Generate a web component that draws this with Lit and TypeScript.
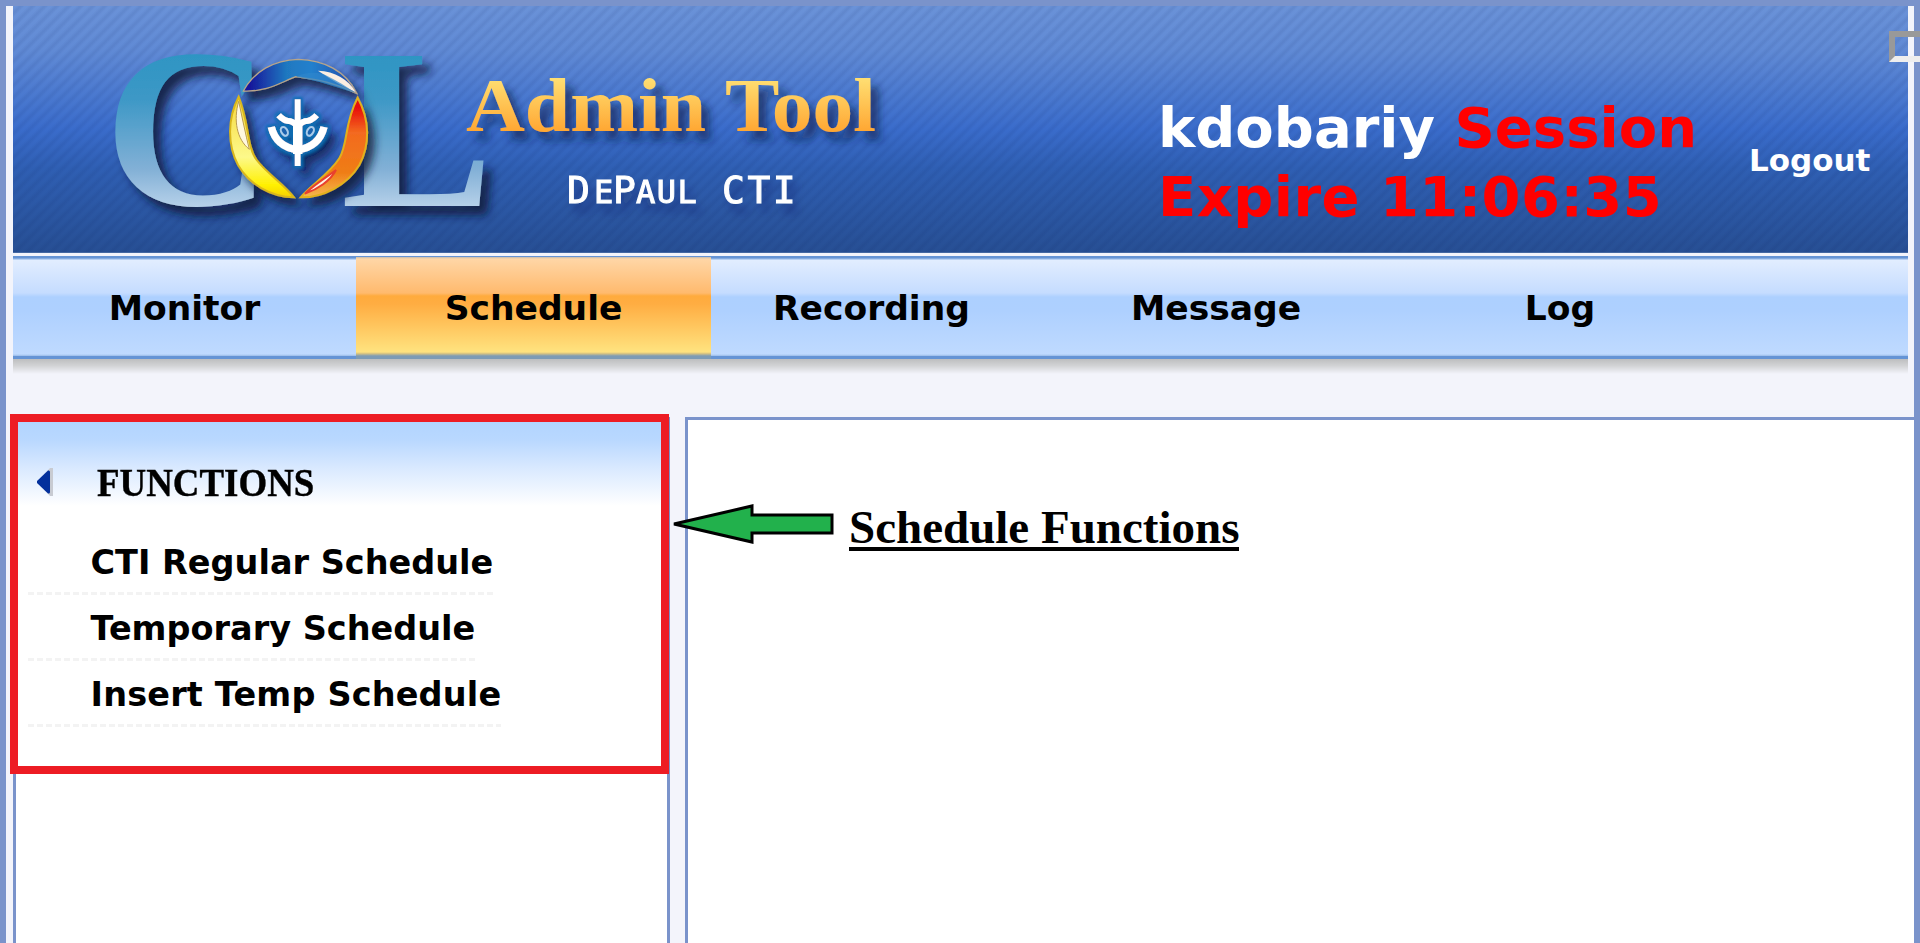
import { LitElement, html, css } from "lit";
import { customElement } from "lit/decorators.js";

@customElement("col-logo")
class ColLogo extends LitElement {
  static styles = css`
    :host { display: block; }
    svg { display: block; overflow: visible; }
    .serif { font-family: "Liberation Serif", serif; font-weight: bold; }
    .mono { font-family: "DejaVu Sans Mono", monospace; font-weight: normal; }
  `;
  render() {
    return html`
      <svg width="900" height="246" viewBox="13 6 900 246">
        <defs>
          <linearGradient id="teal" gradientUnits="userSpaceOnUse" x1="0" y1="52" x2="0" y2="208">
            <stop offset="0" stop-color="#2d95c3" />
            <stop offset="0.3" stop-color="#3d98c6" />
            <stop offset="0.75" stop-color="#82b0d6" />
            <stop offset="1" stop-color="#b8d2ea" />
          </linearGradient>
          <linearGradient id="gold" gradientUnits="userSpaceOnUse" x1="0" y1="76" x2="0" y2="131">
            <stop offset="0" stop-color="#ffe175" />
            <stop offset="1" stop-color="#ffa733" />
          </linearGradient>
          <linearGradient id="blueArc" x1="0" x2="1" y1="0" y2="0">
            <stop offset="0.06" stop-color="#17189b" />
            <stop offset="0.38" stop-color="#1f78c0" />
            <stop offset="0.6" stop-color="#2380cd" />
            <stop offset="1" stop-color="#2447a8" />
          </linearGradient>
          <linearGradient id="redArc" x1="0" x2="0" y1="0" y2="1">
            <stop offset="0.1" stop-color="#e80e0a" />
            <stop offset="0.35" stop-color="#f36a20" />
            <stop offset="0.75" stop-color="#ef7d16" />
            <stop offset="1" stop-color="#f7b94e" />
          </linearGradient>
          <linearGradient id="yellowArc" x1="0" x2="0" y1="0" y2="1">
            <stop offset="0" stop-color="#f6d83c" />
            <stop offset="0.6" stop-color="#fdf98a" />
            <stop offset="0.88" stop-color="#fff000" />
            <stop offset="1" stop-color="#f5d000" />
          </linearGradient>
          <mask id="ring" maskUnits="userSpaceOnUse" x="0" y="0" width="600" height="260">
            <rect width="600" height="260" fill="#fff" />
            <circle cx="298" cy="129" r="65" fill="#000" />
          </mask>
          <filter id="drop" x="-20%" y="-20%" width="150%" height="150%">
            <feDropShadow dx="8" dy="9" stdDeviation="5" flood-color="#0a1638" flood-opacity="0.85" />
          </filter>
          <filter id="softDrop" x="-10%" y="-20%" width="130%" height="160%">
            <feDropShadow dx="8" dy="9" stdDeviation="4" flood-color="#142450" flood-opacity="0.7" />
          </filter>
          <filter id="faintDrop" x="-10%" y="-20%" width="130%" height="180%">
            <feDropShadow dx="6" dy="9" stdDeviation="5" flood-color="#142450" flood-opacity="0.35" />
          </filter>
          <filter id="ringDrop" x="-20%" y="-20%" width="150%" height="150%">
            <feDropShadow dx="20" dy="24" stdDeviation="13" flood-color="#0a1638" flood-opacity="0.8" />
          </filter>
          <filter id="glow" x="-30%" y="-30%" width="170%" height="170%">
            <feMorphology in="SourceAlpha" operator="dilate" radius="6" result="fat" />
            <feGaussianBlur in="fat" stdDeviation="4" result="soft" />
            <feFlood flood-color="#0b6db3" />
            <feComposite in2="soft" operator="in" result="halo" />
            <feMerge result="all"><feMergeNode in="halo" /><feMergeNode in="SourceGraphic" /></feMerge>
            <feDropShadow in="all" dx="22" dy="24" stdDeviation="12" flood-color="#0c1d4c" flood-opacity="0.75" />
          </filter>
        </defs>
        <g class="serif" fill="url(#teal)" filter="url(#drop)">
          <g mask="url(#ring)"><text x="104" y="205" font-size="226" textLength="168" lengthAdjust="spacingAndGlyphs">C</text></g>
          <text x="341" y="206" font-size="229" textLength="152" lengthAdjust="spacingAndGlyphs">L</text>
        </g>
        <g transform="translate(90 30) scale(0.33333)" filter="url(#ringDrop)">
          <path d="M460 183 C492 125 550 90 625 88 C700 90 768 122 800 190 C740 160 690 150 618 140 C570 158 530 186 460 183Z" fill="url(#blueArc)" stroke="#b8a58a" stroke-width="4" />
          <path d="M684 122 C735 124 775 148 797 186 C765 172 728 152 684 122Z" fill="#fbeee2" />
          <path d="M618 140 C650 124 690 126 712 138 C740 152 770 170 796 188 C740 172 680 150 618 140Z" fill="#2d86cc" opacity="0.7" />
          <path d="M803 203 C840 270 840 345 808 405 C772 465 700 503 632 502 C660 468 720 430 748 385 C775 340 762 280 803 203Z" fill="url(#redArc)" stroke="#e2b11c" stroke-width="6" />
          <path d="M645 491 C672 464 712 440 738 420 C722 452 682 478 645 491Z" fill="#fff3e4" stroke="#e9402e" stroke-width="6" />
          <path d="M446 200 C412 265 412 345 444 405 C477 462 540 500 612 502 C585 465 530 430 500 390 C470 350 478 280 446 200Z" fill="url(#yellowArc)" stroke="#d9b71c" stroke-width="6" />
          <path d="M446 214 C456 260 466 310 478 358 C440 328 430 270 446 214Z" fill="#fff8df" stroke="#b99b50" stroke-width="3" />
        </g>
        <g transform="translate(90 30) scale(0.33333)" filter="url(#glow)" fill="none" stroke="#fff">
          <path d="M623 208V408" stroke-width="17" />
          <path d="M623 275V372" stroke-width="28" />
          <path d="M566 256Q582 274 602 274Q618 278 623 296Q628 278 644 274Q664 274 680 256" stroke-width="18" />
          <path d="M544 291Q558 350 623 360Q688 350 702 291" stroke-width="22" />
          <ellipse cx="583" cy="304" rx="9" ry="14" transform="rotate(-30 583 304)" stroke="#a9cdeb" stroke-width="6" fill="#1b62ae" />
          <ellipse cx="661" cy="304" rx="9" ry="14" transform="rotate(30 661 304)" stroke="#a9cdeb" stroke-width="6" fill="#1b62ae" />
        </g>
        <g filter="url(#softDrop)">
          <text class="serif" x="466" y="131" font-size="76" textLength="410" lengthAdjust="spacingAndGlyphs" fill="url(#gold)">Admin Tool</text>
        </g>
        <text class="mono" y="202.5" fill="#fff" stroke="#fff" stroke-width="1" filter="url(#faintDrop)"><tspan x="567" font-size="38">D</tspan><tspan x="594" font-size="32">E</tspan><tspan x="613" font-size="38">P</tspan><tspan x="636" font-size="32" letter-spacing="1.5">AUL</tspan><tspan x="722" font-size="38" letter-spacing="2.5">CTI</tspan></text>
      </svg>
    `;
  }
}

@customElement("app-root")
class AppRoot extends LitElement {
  static styles = css`
    :host {
      display: block;
      position: relative;
      box-sizing: border-box;
      width: 1920px;
      height: 943px;
      border: 6px solid #7a93cb;
      border-bottom: 0;
      background: #f3f4fb;
      font-family: "DejaVu Sans", Verdana, sans-serif;
      font-weight: bold;
      color: #000;
    }
    .header {
      margin: 0 6px 0 7px;
      height: 247px;
      box-sizing: border-box;
      border-bottom: 1px solid #4468a2;
      display: flex;
      background:
        repeating-linear-gradient(135deg, rgba(10, 30, 90, 0) 0 2px, rgba(10, 30, 90, 0.08) 5px 6px, rgba(10, 30, 90, 0) 8.5px),
        linear-gradient(#6a92d8 0%, #608ad5 18%, #3a6ccb 50%, #2f5fb3 66%, #274f94 100%);
    }
    .logo { width: 900px; flex: none; }
    .session {
      flex: none;
      width: 590px;
      margin-left: 245px;
      padding-top: 87px;
      font-size: 56px;
      line-height: 69px;
      color: #f00;
      white-space: nowrap;
    }
    .user { color: #fff; }
    .timer { letter-spacing: 0.45px; }
    .logout {
      padding-top: 136px;
      margin-left: 1px;
      font-size: 31px;
      line-height: 36px;
      color: #fff;
    }
    .nav {
      margin: 3px 6px 0 7px;
      height: 103px;
      display: grid;
      grid-template-columns: 343px 355px 321px 368px 320px;
      background: linear-gradient(#6594d5 0 2px, #a3c1ea 3px, #e1edff 4.5px, #c5dcff 37px, #add0ff 41px, #aed0ff 55px, #bfdaff 98px, #a3c3ee 99.5px, #6594d5 100.5px);
    }
    .tab { font-size: 34.5px; line-height: 104px; text-align: center; white-space: nowrap; }
    .tab.on {
      margin: 1px 0 3px;
      line-height: 102px;
      background: linear-gradient(#c6bcae 0, #ffd6a6 2px, #ffba6e 36px, #ffab3d 39px, #ffad42 47px, #ffe37f 95px, #d9c582 96.5px, #7d9bb5 99px);
    }
    .shade { margin: 0 6px 0 7px; height: 15px; background: linear-gradient(#bdbebf, #d2d3d5 45%, #f3f4fb); }
    .body { display: flex; margin: 43px 0 0 7px; height: 526px; }
    .side {
      box-sizing: border-box;
      width: 657px;
      border: solid #7a93cb;
      border-width: 3px 3px 0;
      background: linear-gradient(#b1d4ff 0, #b9d8ff 20px, #d9e9ff 48px, #fff 86px);
    }
    .head { display: flex; align-items: center; height: 109px; padding: 14px 0 0 21px; box-sizing: border-box; }
    .title {
      margin-left: 44px;
      font: bold 41px/46px "Liberation Serif", serif;
      -webkit-text-stroke: 0.4px #000;
      transform: scaleX(0.9);
      transform-origin: 0 50%;
    }
    .list { display: flex; flex-direction: column; align-items: flex-start; margin-left: 12px; }
    .item {
      box-sizing: border-box;
      height: 66px;
      padding: 4px 0 0 62.5px;
      line-height: 59px;
      font-size: 33.5px;
      white-space: nowrap;
      background: repeating-linear-gradient(90deg, #f3f3f3 0 6px, transparent 6px 9px) 0 100% / 100% 3px no-repeat;
    }
    .item:last-child { letter-spacing: 0.17px; }
    .main {
      flex: 1;
      box-sizing: border-box;
      margin-left: 15px;
      border: solid #7a93cb;
      border-width: 3px 0 0 3px;
      background: #fff;
      padding: 80px 0 0 161px;
    }
    .heading {
      display: inline-block;
      font: bold 47px/54px "Liberation Serif", serif;
      height: 47px;
      border-bottom: 4px solid #000;
    }
    .frame {
      position: absolute;
      box-sizing: border-box;
      left: 4px;
      top: 408px;
      width: 659px;
      height: 360px;
      border: 8px solid #ed1c24;
    }
    .arrow { position: absolute; left: 664px; top: 494px; }
    .bevel {
      position: absolute;
      left: 1883px;
      top: 25px;
      width: 25px;
      height: 19px;
      border: 6px solid;
      border-color: #999 transparent #eee #999;
      border-right: 0;
    }
  `;
  tabs = ["Monitor", "Schedule", "Recording", "Message", "Log"];
  items = ["CTI Regular Schedule", "Temporary Schedule", "Insert Temp Schedule"];
  render() {
    return html`
      <div class="header">
        <col-logo class="logo"></col-logo>
        <div class="session"><span class="user">kdobariy</span> Session<br /><span class="timer">Expire 11:06:35</span></div>
        <div class="logout">Logout</div>
      </div>
      <div class="nav">
        ${this.tabs.map((t) => html`<div class="tab ${t === "Schedule" ? "on" : ""}">${t}</div>`)}
      </div>
      <div class="shade"></div>
      <div class="body">
        <div class="side">
          <div class="head">
            <svg width="16" height="28" viewBox="0 0 16 28">
              <path d="M0 14L13 0H16V28H13Z" fill="#c8cbd2" />
              <path d="M0 13V15L11 25.5Q13 26 13 24V4Q13 2 11 2.5Z" fill="#03309c" />
            </svg>
            <div class="title">FUNCTIONS</div>
          </div>
          <div class="list">${this.items.map((t) => html`<div class="item">${t}</div>`)}</div>
        </div>
        <div class="main"><div class="heading">Schedule Functions</div></div>
      </div>
      <div class="frame"></div>
      <svg class="arrow" width="172" height="50" viewBox="670 500 172 50">
        <path d="M674 524L752 506V515H832V533H752V542Z" fill="#22b14c" stroke="#000" stroke-width="3" stroke-miterlimit="2" />
      </svg>
      <div class="bevel"></div>
    `;
  }
}
